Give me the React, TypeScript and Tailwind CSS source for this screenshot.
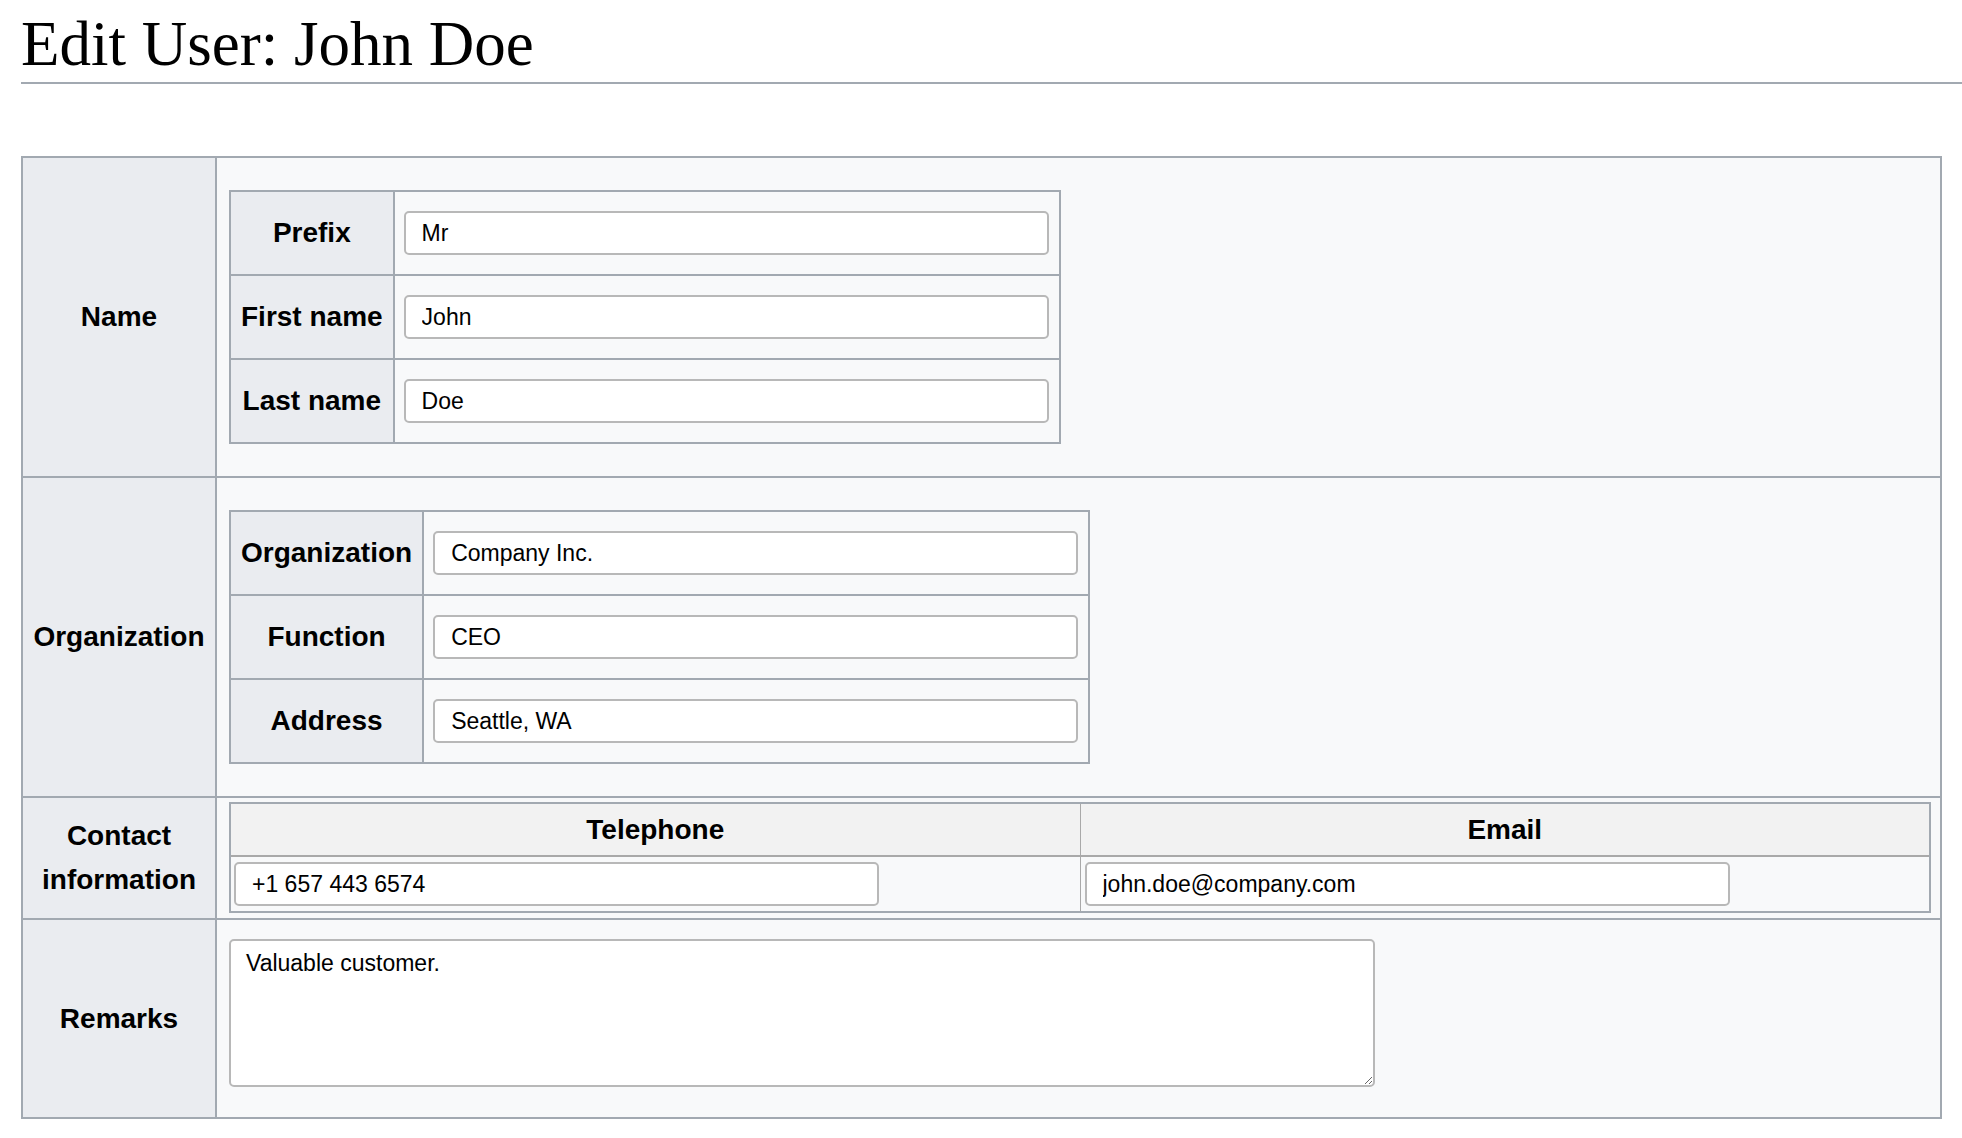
const nameFields = [
  { label: 'Prefix', value: 'Mr' },
  { label: 'First name', value: 'John' },
  { label: 'Last name', value: 'Doe' },
]

const orgFields = [
  { label: 'Organization', value: 'Company Inc.' },
  { label: 'Function', value: 'CEO' },
  { label: 'Address', value: 'Seattle, WA' },
]

function TextInput({ value }: { value: string }) {
  return (
    <input
      defaultValue={value}
      className="w-[645px] h-[44px] border-2 border-[#b8b8b8] rounded-[5px] bg-white pl-[16px] text-[23px] text-black outline-none"
    />
  )
}

function FieldTable({ fields }: { fields: { label: string; value: string }[] }) {
  return (
    <div className="grid w-max grid-cols-[max-content_664px] gap-[2px] border-2 border-[#a2a9b1] bg-[#a2a9b1]">
      {fields.map(f => (
        <div key={f.label} className="contents">
          <div className="h-[82px] flex items-center justify-center px-[10px] bg-[#eaecf0] font-bold text-[28px]">
            {f.label}
          </div>
          <div className="h-[82px] flex items-center px-[9px] bg-[#f8f9fa]">
            <TextInput value={f.value} />
          </div>
        </div>
      ))}
    </div>
  )
}

function RowHead({ children }: { children: React.ReactNode }) {
  return (
    <div className="flex items-center justify-center text-center px-[10px] bg-[#eaecf0] font-bold text-[28px] leading-[44px]">
      {children}
    </div>
  )
}

export default function App() {
  return (
    <div className="min-h-screen bg-white text-black font-['Liberation_Sans',Arial,sans-serif]">
      <h1 className="ml-[21px] pt-[6px] border-b-2 border-[#a2a9b1] font-['Liberation_Serif','Times_New_Roman',serif] text-[63px] leading-[76px]">
        Edit User: John Doe
      </h1>

      <div className="ml-[21px] mt-[72px] w-[1921px] grid grid-cols-[192px_1fr] gap-[2px] border-2 border-[#a2a9b1] bg-[#a2a9b1]">
        <RowHead>Name</RowHead>
        <div className="bg-[#f8f9fa] pl-[12px] py-[32px]">
          <FieldTable fields={nameFields} />
        </div>

        <RowHead>Organization</RowHead>
        <div className="bg-[#f8f9fa] pl-[12px] py-[32px]">
          <FieldTable fields={orgFields} />
        </div>

        <RowHead>Contact information</RowHead>
        <div className="bg-[#f8f9fa] pl-[12px] pr-[9px] pt-[4px] pb-[5px]">
          <div className="grid grid-cols-2 gap-x-px gap-y-[2px] border-2 border-[#a2a9b1] bg-[#a9a9a9]">
            <div className="h-[51px] flex items-center justify-center bg-[#f2f2f2] font-bold text-[28px]">Telephone</div>
            <div className="h-[51px] flex items-center justify-center bg-[#f2f2f2] font-bold text-[28px]">Email</div>
            <div className="h-[54px] flex items-center pl-[3px] bg-[#f8f9fa]">
              <TextInput value="+1 657 443 6574" />
            </div>
            <div className="h-[54px] flex items-center pl-[4px] bg-[#f8f9fa]">
              <TextInput value="john.doe@company.com" />
            </div>
          </div>
        </div>

        <RowHead>Remarks</RowHead>
        <div className="bg-[#f8f9fa] pl-[12px] pt-[19px] pb-[30px]">
          <textarea
            defaultValue="Valuable customer."
            className="block w-[1146px] h-[148px] border-2 border-[#b8b8b8] rounded-[5px] bg-white px-[15px] pt-[8px] text-[23px] leading-[28px] text-black outline-none"
          />
        </div>
      </div>
    </div>
  )
}
